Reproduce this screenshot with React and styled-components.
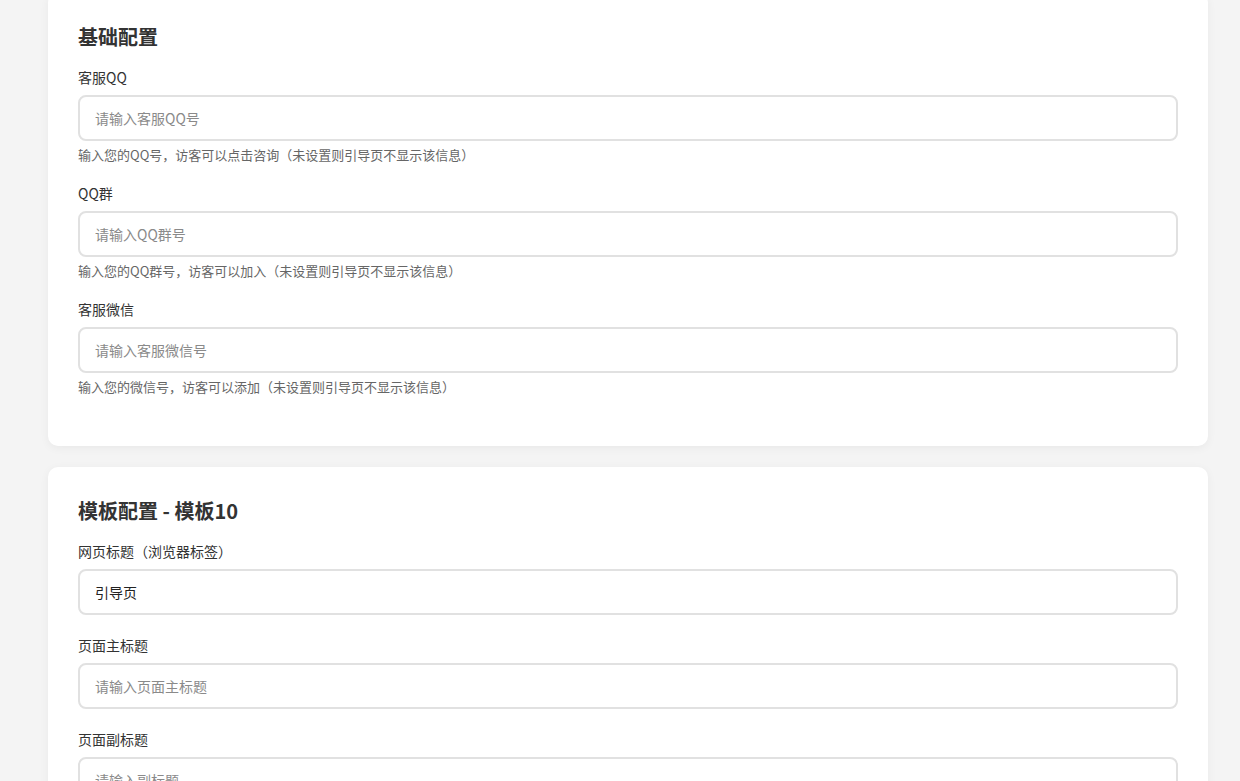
import React from 'react';
import styled, { createGlobalStyle } from 'styled-components';

const GlobalStyle = createGlobalStyle`
  html, body {
    margin: 0;
    padding: 0;
    background: #f4f4f4;
    font-family: "Noto Sans CJK SC", "Microsoft YaHei", sans-serif;
    color: #333;
  }
  * {
    box-sizing: border-box;
  }
`;

const Page = styled.div`
  width: 1160px;
  margin: -7px 0 0 48px;
  display: flex;
  flex-direction: column;
  gap: 21px;
`;

const Card = styled.section`
  background: #fff;
  border-radius: 10px;
  box-shadow: 0 2px 10px rgba(0, 0, 0, 0.05);
  padding: 30px 30px 31px;
`;

const CardTitle = styled.h2`
  margin: 0 0 16px;
  font-size: 20px;
  line-height: 28px;
  font-weight: 700;
  color: #333;
`;

const FormGroup = styled.div`
  margin-bottom: 20px;
`;

const Label = styled.label`
  display: block;
  font-size: 14px;
  line-height: 20px;
  color: #333;
  margin-bottom: 8px;
`;

const Input = styled.input`
  display: block;
  width: 100%;
  height: 46px;
  padding: 0 15px;
  border: 2px solid #e1e1e1;
  border-radius: 8px;
  font-family: inherit;
  font-size: 14px;
  color: #222;
  background: #fff;
  outline: none;

  &::placeholder {
    color: #8a8a8a;
  }
`;

const Help = styled.div`
  margin-top: 5px;
  font-size: 13px;
  line-height: 17px;
  color: #666;
`;

const basicFields = [
  {
    label: '客服QQ',
    placeholder: '请输入客服QQ号',
    help: '输入您的QQ号，访客可以点击咨询（未设置则引导页不显示该信息）',
  },
  {
    label: 'QQ群',
    placeholder: '请输入QQ群号',
    help: '输入您的QQ群号，访客可以加入（未设置则引导页不显示该信息）',
  },
  {
    label: '客服微信',
    placeholder: '请输入客服微信号',
    help: '输入您的微信号，访客可以添加（未设置则引导页不显示该信息）',
  },
];

const templateFields = [
  { label: '网页标题（浏览器标签）', value: '引导页' },
  { label: '页面主标题', placeholder: '请输入页面主标题' },
  { label: '页面副标题', placeholder: '请输入副标题' },
];

function Field({ label, placeholder, value, help }) {
  return (
    <FormGroup>
      <Label>{label}</Label>
      <Input placeholder={placeholder} defaultValue={value} />
      {help && <Help>{help}</Help>}
    </FormGroup>
  );
}

export default function App() {
  return (
    <>
      <GlobalStyle />
      <Page>
        <Card>
          <CardTitle>基础配置</CardTitle>
          {basicFields.map((f) => (
            <Field key={f.label} {...f} />
          ))}
        </Card>
        <Card>
          <CardTitle>模板配置 - 模板10</CardTitle>
          {templateFields.map((f) => (
            <Field key={f.label} {...f} />
          ))}
        </Card>
      </Page>
    </>
  );
}
